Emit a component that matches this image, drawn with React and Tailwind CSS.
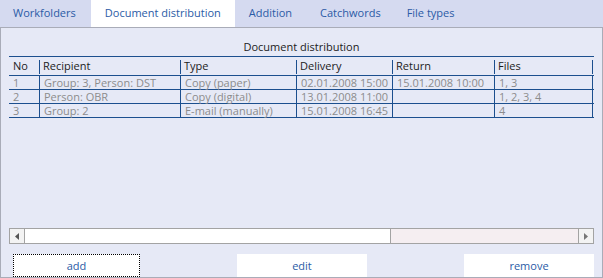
import React from "react";

const cols = "grid-cols-[30px_141px_116px_96px_102px_99px]";

const rows = [
  ["1", "Group: 3, Person: DST", "Copy (paper)", "02.01.2008 15:00", "15.01.2008 10:00", "1, 3"],
  ["2", "Person: OBR", "Copy (digital)", "13.01.2008 11:00", "", "1, 2, 3, 4"],
  ["3", "Group: 2", "E-mail (manually)", "15.01.2008 16:45", "", "4"],
];

const headers = ["No", "Recipient", "Type", "Delivery", "Return", "Files"];

export default function App() {
  return (
    <div
      className="w-[603px] h-[278px] overflow-hidden bg-[#d5daf0] flex flex-col text-[11px]"
      style={{ fontFamily: '"Open Sans", "Noto Sans", sans-serif' }}
    >
      <div className="h-[27px] flex items-stretch text-[#2b5ba6] shrink-0">
        <div className="pl-[13px] pr-[15px] flex items-center">Workfolders</div>
        <div className="px-[14px] flex items-center bg-white">Document distribution</div>
        <div className="px-[14px] flex items-center">Addition</div>
        <div className="pl-[14px] pr-[13px] flex items-center">Catchwords</div>
        <div className="px-[13px] flex items-center">File types</div>
      </div>
      <div className="flex-1 bg-[#e6e9f6] border border-[#a9acb8] flex flex-col pl-[8px] pr-[8px]">
        <div className="h-[28px] flex items-end justify-center pb-[2px] text-[#1c1c1c] leading-none">
          <span className="pb-[2px]">Document distribution</span>
        </div>
        <div className="border-t border-[#1c4f8e]">
          <div className={`grid ${cols} h-[19px] border-b border-[#1c4f8e] text-[#1c1c1c]`}>
            {headers.map((h, i) => (
              <div key={i} className="relative flex items-center pl-[4px]">
                {i > 0 && (
                  <span className="absolute left-0 top-[3px] h-[14px] w-px bg-[#1c4f8e]" />
                )}
                {i === 5 && (
                  <span className="absolute right-0 top-[3px] h-[14px] w-px bg-[#1c4f8e]" />
                )}
                {h}
              </div>
            ))}
          </div>
          {rows.map((r, ri) => (
            <div key={ri} className={`grid ${cols} h-[14px] border-b border-[#1c4f8e] text-[#8c8c8c]`}>
              {r.map((c, i) => (
                <div
                  key={i}
                  className={`flex items-center pl-[4px] leading-none whitespace-nowrap ${i > 0 ? "border-l border-[#1c4f8e]" : ""} ${i === 5 ? "border-r border-[#1c4f8e]" : ""}`}
                >
                  {c}
                </div>
              ))}
            </div>
          ))}
        </div>
        <div className="flex-1" />
        <div className="h-[16px] flex border border-[#a3a3a3] bg-[#f5eef1] shrink-0">
          <div className="w-[15px] border-r border-[#a3a3a3] bg-[#f3f3f3] flex items-center justify-center">
            <svg width="4" height="7" viewBox="0 0 4 7"><path d="M4 0 L0 3.5 L4 7 Z" fill="#555" /></svg>
          </div>
          <div className="w-[366px] bg-white border-r border-[#a3a3a3]" />
          <div className="flex-1" />
          <div className="w-[15px] border-l border-[#a3a3a3] bg-[#f3f3f3] flex items-center justify-center">
            <svg width="4" height="7" viewBox="0 0 4 7"><path d="M0 0 L4 3.5 L0 7 Z" fill="#777" /></svg>
          </div>
        </div>
        <div className="h-[10px] shrink-0" />
        <div className="h-[23px] flex justify-between pl-[4px] shrink-0 text-[#2b5ba6]">
          <div className="w-[127px] bg-white border border-dotted border-black flex items-center justify-center pt-[2px]">add</div>
          <div className="w-[130px] bg-white flex items-center justify-center pt-[2px]">edit</div>
          <div className="w-[130px] bg-white flex items-center justify-center pt-[2px]">remove</div>
        </div>
      </div>
    </div>
  );
}
